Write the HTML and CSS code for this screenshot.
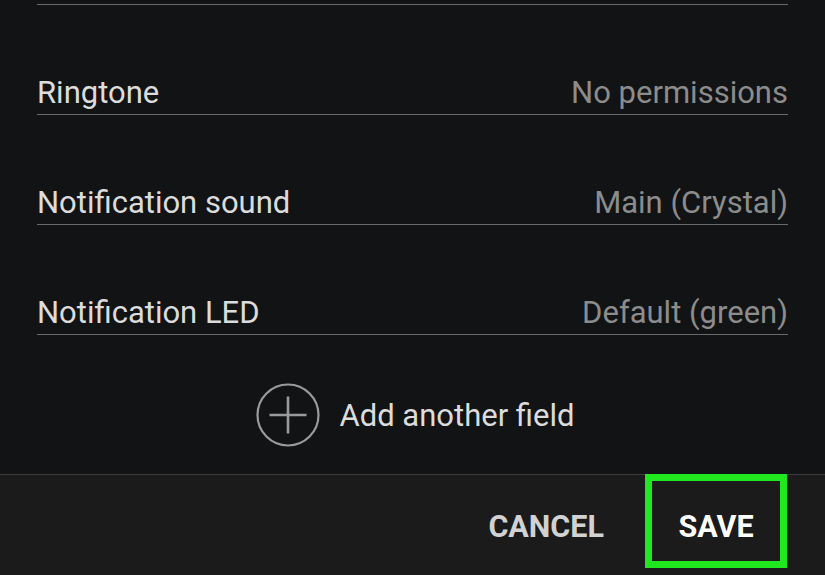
FILE: index.html
```html
<!DOCTYPE html>
<html>
<head>
<meta charset="utf-8">
<link rel="stylesheet" href="styles.css">
</head>
<body>
<div class="screen">
  <div class="form">
    <div class="prev-field"></div>
    <div class="row"><span class="label">Ringtone</span><span class="value">No permissions</span></div>
    <div class="row"><span class="label">Notification sound</span><span class="value">Main (Crystal)</span></div>
    <div class="row"><span class="label">Notification LED</span><span class="value">Default (green)</span></div>
    <div class="add-row">
      <svg class="add-icon" width="64" height="64" viewBox="0 0 64 64">
        <circle cx="32" cy="32" r="30.5" fill="none" stroke="#9a9a9a" stroke-width="2.2"/>
        <path d="M32 13.5 V50.5 M13.5 32 H50.5" stroke="#9a9a9a" stroke-width="2.6" fill="none"/>
      </svg>
      <span class="add-text">Add another field</span>
    </div>
  </div>
  <div class="footer">
    <div class="btn cancel">CANCEL</div>
    <div class="btn save">SAVE</div>
  </div>
</div>
</body>
</html>
```
FILE: styles.css
```css
html, body {
  margin: 0;
  padding: 0;
  background: #121315;
}
body {
  font-family: Roboto, "Noto Sans", sans-serif;
  width: 825px;
  height: 575px;
  overflow: hidden;
}
.screen {
  display: flex;
  flex-direction: column;
  height: 575px;
}
.form {
  padding: 0 37px 0 37px;
}
.prev-field {
  height: 4px;
  border-bottom: 1px solid #6a6a6a;
}
.row {
  height: 109px;
  border-bottom: 1px solid #6a6a6a;
  display: flex;
  justify-content: space-between;
  align-items: flex-end;
  box-sizing: content-box;
}
.row span {
  font-size: 31px;
  line-height: 34px;
  padding-bottom: 4px;
}
.label {
  color: #dcdcdc;
}
.value {
  color: #8c8c8c;
}
.add-row {
  height: 139px;
  display: flex;
  align-items: flex-start;
  justify-content: center;
  padding-left: 6px;
  box-sizing: border-box;
}
.add-icon {
  margin-top: 48px;
}
.add-text {
  margin-top: 64px;
  margin-left: 19px;
  font-size: 31px;
  line-height: 34px;
  color: #dcdcdc;
}
.footer {
  flex: 1;
  background: #1b1b1c;
  border-top: 1px solid #3c3c3c;
  display: flex;
  justify-content: flex-end;
  align-items: flex-start;
  padding-right: 38px;
}
.btn {
  font-weight: bold;
  font-size: 30.5px;
  line-height: 34px;
  box-sizing: border-box;
}
.cancel {
  color: #d2d2d2;
  margin-top: 35px;
  margin-right: 41px;
}
.save {
  color: #ffffff;
  width: 142px;
  height: 94px;
  margin-top: -1px;
  border: 7px solid #1fe81f;
  display: flex;
  justify-content: center;
  align-items: flex-start;
  padding-top: 29px;
}
```
